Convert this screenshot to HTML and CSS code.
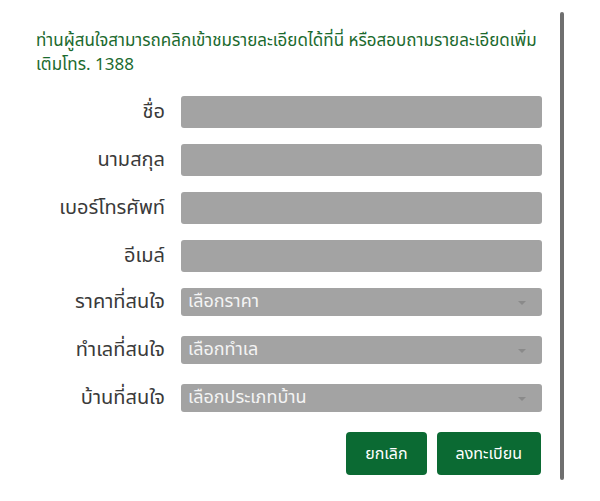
FILE: index.html
```html
<!DOCTYPE html>
<html lang="th">
<head>
    <meta charset="UTF-8">
    <meta name="viewport" content="width=device-width, initial-scale=1.0">
    <title>ลงทะเบียน</title>
    <link rel="stylesheet" href="styles.css">
</head>
<body>
    <div class="modal">
        <p class="intro">ท่านผู้สนใจสามารถคลิกเข้าชมรายละเอียดได้ที่นี่ หรือสอบถามรายละเอียดเพิ่ม<br>เติมโทร. 1388</p>
        <form id="registerForm" class="form">
            <div class="row">
                <label for="first_name">ชื่อ</label>
                <input type="text" id="first_name" name="first_name">
            </div>
            <div class="row">
                <label for="last_name">นามสกุล</label>
                <input type="text" id="last_name" name="last_name">
            </div>
            <div class="row">
                <label for="phone">เบอร์โทรศัพท์</label>
                <input type="text" id="phone" name="phone">
            </div>
            <div class="row">
                <label for="email">อีเมล์</label>
                <input type="text" id="email" name="email">
            </div>
            <div class="row row-select">
                <label for="price">ราคาที่สนใจ</label>
                <div class="select">เลือกราคา<span class="caret"></span></div>
            </div>
            <div class="row row-select">
                <label for="location">ทำเลที่สนใจ</label>
                <div class="select">เลือกทำเล<span class="caret"></span></div>
            </div>
            <div class="row row-select">
                <label for="house">บ้านที่สนใจ</label>
                <div class="select">เลือกประเภทบ้าน<span class="caret"></span></div>
            </div>
            <div class="actions">
                <button type="button">ยกเลิก</button>
                <button type="submit">ลงทะเบียน</button>
            </div>
        </form>
    </div>
    <div class="scrollbar">
        <div class="thumb"></div>
    </div>
</body>
</html>
```

FILE: styles.css
```css
body, html {
    margin: 0;
    padding: 0;
    background: white;
    font-family: "Noto Sans Thai", "Noto Sans", sans-serif;
}
body {
    display: flex;
    align-items: flex-start;
}
.modal {
    width: 505px;
    padding: 29px 19px 0 36px;
}
.intro {
    margin: 0 0 19px 0;
    font-size: 17px;
    line-height: 24px;
    color: #1b6a2e;
}
.form {
    display: flex;
    flex-direction: column;
    gap: 16px;
}
.row {
    display: grid;
    grid-template-columns: 128px 361px;
    column-gap: 16px;
    align-items: center;
    margin-left: 1px;
}
.row label {
    text-align: right;
    font-size: 20px;
    line-height: 28px;
    color: #3a3a3a;
}
.row input {
    height: 32px;
    box-sizing: border-box;
    border: none;
    border-radius: 3px;
    background: #a3a3a3;
}
.row-select {
    margin-bottom: 4px;
}
.select {
    position: relative;
    height: 28px;
    box-sizing: border-box;
    padding: 0 7px;
    border-radius: 3px;
    background: #a3a3a3;
    color: #f4f4f4;
    font-size: 18px;
    line-height: 28px;
}
.caret {
    position: absolute;
    right: 16px;
    top: 13px;
    border-left: 4px solid transparent;
    border-right: 4px solid transparent;
    border-top: 4px solid #8a8a8a;
}
.actions {
    display: flex;
    justify-content: flex-end;
    gap: 10px;
}
.actions button {
    height: 43px;
    padding: 0 19px;
    border: none;
    border-radius: 4px;
    background: #0b6a33;
    color: white;
    font-family: inherit;
    font-size: 16px;
}
.scrollbar {
    padding-top: 12px;
}
.thumb {
    width: 4px;
    height: 468px;
    border-radius: 2px;
    background: #6f6f6f;
}
```
